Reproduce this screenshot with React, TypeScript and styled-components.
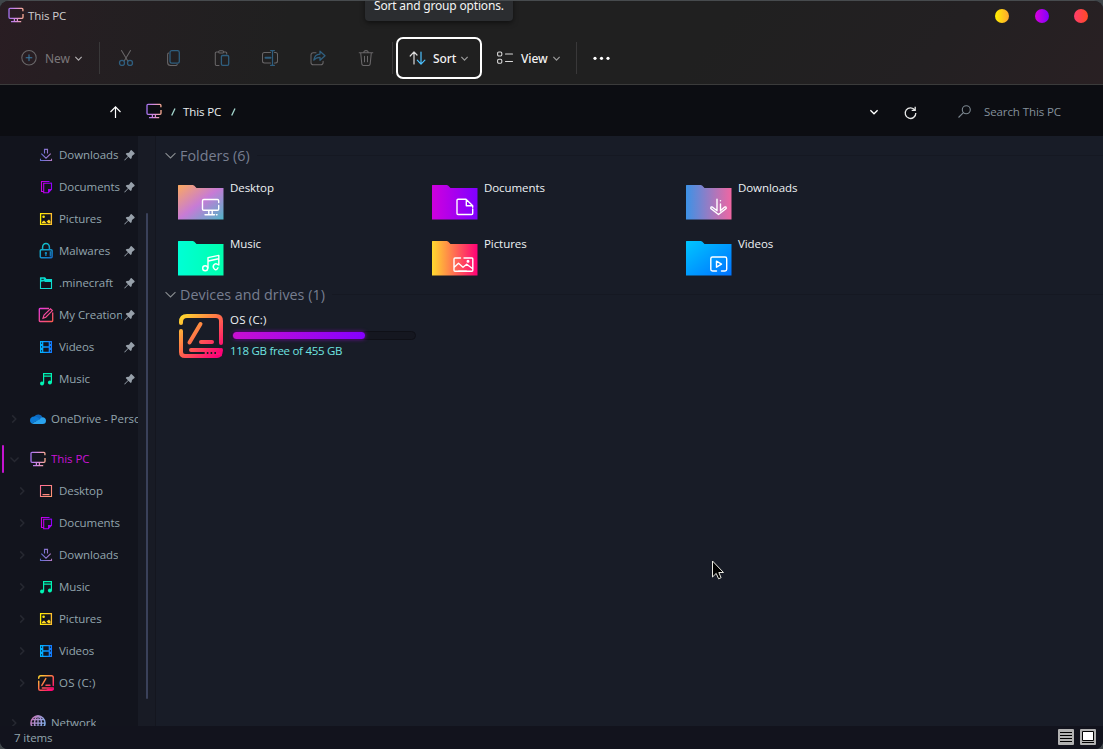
import React from 'react';
import styled, { createGlobalStyle } from 'styled-components';

const Global = createGlobalStyle`
  html, body { margin: 0; padding: 0; background: #40464a; overflow: hidden; }
  * { box-sizing: border-box; }
  svg { display: block; flex: none; overflow: visible; }
`;

const Window = styled.div`
  position: relative;
  width: 1103px;
  height: 749px;
  display: flex;
  flex-direction: column;
  border-top: 1px solid #474b4e;
  border-radius: 9px 9px 8px 8px;
  overflow: hidden;
  background: #181c27;
  font-family: 'Open Sans', 'Noto Sans', sans-serif;
  font-size: 11.5px;
  letter-spacing: -0.1px;
  color: #93a5ad;
  white-space: nowrap;
  cursor: default;
`;

const Header = styled.header`
  flex: none;
  height: 84px;
  border-bottom: 1px solid #3b3b3b;
  background:
    linear-gradient(100deg, rgba(46, 27, 36, 0.65) 0, rgba(42, 29, 36, 0.4) 110px, rgba(32, 32, 32, 0) 290px),
    linear-gradient(310deg, #292023 0, #232022 150px, #202020 330px);
`;

const TitleBar = styled.div`
  display: flex;
  align-items: center;
  height: 30px;
  padding: 0 15px 0 8px;
  color: #d0ced0;
`;

const TitleGroup = styled.div`
  display: flex;
  align-items: center;
  flex: 1;
  gap: 4px;
  margin-bottom: 2px;
`;

const Controls = styled.div`
  display: flex;
  gap: 25.5px;
`;

const Dot = styled.span<{ $from: string; $to: string }>`
  width: 14px;
  height: 14px;
  border-radius: 50%;
  background: linear-gradient(90deg, ${(p) => p.$from}, ${(p) => p.$to});
`;

const Toolbar = styled.div`
  display: flex;
  align-items: center;
  height: 42px;
  margin-top: 6px;
  padding-left: 20.5px;
`;

const ToolLabel = styled.span<{ $dim?: boolean }>`
  font-family: 'Noto Sans', 'Open Sans', sans-serif;
  font-size: 12px;
  letter-spacing: -0.05px;
  font-weight: ${(p) => (p.$dim ? 400 : 500)};
  color: ${(p) => (p.$dim ? '#7b777a' : '#f2f2f2')};
`;

const NewButton = styled.div`
  display: flex;
  align-items: center;
  width: 78.5px;
  ${ToolLabel} { margin-left: 8.5px; width: 30px; }
`;

const Separator = styled.span`
  width: 1px;
  height: 32px;
  background: #393839;
`;

const IconStrip = styled.div`
  display: flex;
  gap: 32px;
  padding: 0 18px;
`;

const SortButton = styled.div`
  display: flex;
  align-items: center;
  width: 86px;
  height: 42px;
  margin-left: 3px;
  padding-left: 11px;
  border: 2px solid #fff;
  border-radius: 7px;
  ${ToolLabel} { margin-left: 7px; width: 28px; }
`;

const ViewButton = styled.div`
  display: flex;
  align-items: center;
  width: 94px;
  padding-left: 15px;
  ${ToolLabel} { margin-left: 8px; width: 31.5px; }
`;

const MoreButton = styled.div`
  padding-left: 15.500px;
`;

const AddressBar = styled.div`
  flex: none;
  display: flex;
  align-items: center;
  height: 51px;
  padding: 2px 0 0 110px;
  background: #0c0d12;
  color: #e8ecee;
`;

const Crumb = styled.span<{ $last?: boolean }>`
  margin: 0 7px 0 ${(p) => (p.$last ? 10 : 9)}px;
`;

const Crumbs = styled.div`
  display: flex;
  align-items: center;
  width: 749px;
  padding-left: 25px;
  > svg { margin-bottom: 1.500px; }
`;

const RefreshGroup = styled.div`
  display: flex;
  align-items: center;
  gap: 26px;
  padding-top: 1px;
`;

const Search = styled.div`
  display: flex;
  align-items: center;
  gap: 13px;
  margin-left: 41px;
  color: #84909b;
`;

const Body = styled.div`
  flex: none;
  display: flex;
  height: 590px;
`;

const Sidebar = styled.nav`
  width: 138px;
  padding-top: 3px;
  overflow: hidden;
  background: #12141d;
`;

const SideRow = styled.div<{ $level?: boolean; $gap?: boolean; $active?: boolean }>`
  position: relative;
  display: flex;
  align-items: center;
  height: 32px;
  margin-top: ${(p) => (p.$gap ? 8 : 0)}px;
  padding-left: ${(p) => (p.$level ? 18 : 10)}px;
  color: ${(p) => (p.$active ? '#c913d6' : '#93a5ad')};
  &::before {
    content: '';
    position: absolute;
    left: 2px;
    top: 2px;
    width: 2px;
    height: 28px;
    border-radius: 1px;
    background: ${(p) => (p.$active ? '#c414d0' : 'transparent')};
  }
`;

const Arrow = styled.span`
  width: 20px;
  flex: none;
`;

const SideLabel = styled.span<{ $pinned?: boolean; $loose?: boolean }>`
  margin: 0 2px 2px 5px;
  flex: none;
  overflow: hidden;
  letter-spacing: ${(p) => (p.$loose ? '0.2px' : '-0.06px')};
  width: ${(p) => (p.$pinned ? '63px' : 'auto')};
`;

const ScrollLane = styled.div`
  width: 18px;
  padding: 77px 0 0 8px;
  background: #181b25;
  border-right: 1px solid #14161f;
`;

const Thumb = styled.div`
  width: 2px;
  height: 486px;
  border-radius: 1px;
  background: #3a415a;
`;

const Content = styled.main`
  flex: 1;
  padding: 8px 0 0 9px;
  background: #181c27;
`;

const GroupHeader = styled.div`
  display: flex;
  align-items: center;
  height: 23px;
  font-size: 14.3px;
  letter-spacing: 0.03px;
  color: #777e90;
  span { margin-left: 4px; }
  &::after {
    content: '';
    flex: 1;
    height: 1px;
    margin-left: 7px;
    background: #151822;
  }
`;

const Grid = styled.div`
  display: grid;
  grid-template-columns: repeat(3, 254px);
  grid-auto-rows: 56px;
  padding: 18px 0 0 13px;
  height: 116px;
`;

const Tile = styled.div`
  display: flex;
  gap: 6px;
  color: #eef2f4;
`;

const TileName = styled.span`
  margin-top: -5px;
  line-height: 16px;
  letter-spacing: -0.07px;
`;

const Drive = styled.div`
  display: flex;
  gap: 6px;
  padding: 6px 0 0 13px;
  > svg { margin-top: 1px; }
`;

const DriveInfo = styled.div`
  width: 186px;
  line-height: 16px;
`;

const DriveName = styled.div`
  letter-spacing: 0.2px;
  color: #eef2f4;
`;

const Meter = styled.div`
  width: 185px;
  height: 9px;
  margin: 3px 0 3px 1px;
  padding: 1px;
  border: 1px solid #0f1017;
  border-radius: 5px;
  background: #151720;
`;

const MeterFill = styled.div`
  width: 132px;
  height: 7px;
  margin-top: -1px;
  border-radius: 4px;
  background: linear-gradient(90deg, #c80fd2, #8500ff);
  box-shadow: 0 0 4px rgba(165, 10, 230, 0.75);
`;

const DriveFree = styled.div`
  letter-spacing: -0.29px;
  color: #6fe3e0;
`;

const StatusBar = styled.footer`
  flex: 1;
  display: flex;
  align-items: center;
  padding: 0 7px 0 14px;
  background: #12131d;
`;

const StatusText = styled.span`
  flex: 1;
  color: #93a5ad;
`;

const ViewModes = styled.div`
  display: flex;
  gap: 6px;
  margin-bottom: 1px;
`;

const Tooltip = styled.div`
  position: absolute;
  left: 365px;
  top: -6px;
  width: 148px;
  height: 26px;
  padding-left: 9px;
  line-height: 22px;
  font-family: 'Noto Sans', 'Open Sans', sans-serif;
  font-size: 12px;
  letter-spacing: -0.18px;
  color: #f4f4f4;
  background: #2b2d30;
  border-radius: 4px;
  box-shadow: 0 2px 5px rgba(0, 0, 0, 0.5);
`;

const Pointer = styled.svg`
  position: absolute;
  left: 712px;
  top: 559px;
`;

type Stops = [string, string] | [string, string, string];
const Grad = ({ id, c, diag }: { id: string; c: Stops; diag?: boolean }) => (
  <linearGradient id={id} x1="0" y1="0" x2="1" y2={diag ? 1 : 0}>
    {c.map((color, i) => (
      <stop key={i} offset={i / (c.length - 1)} stopColor={color} />
    ))}
  </linearGradient>
);

const GradientDefs = styled.svg`
  position: absolute;
`;

const SharedGradients = () => (
  <GradientDefs width="0" height="0">
    <defs>
      <linearGradient id="pc" gradientUnits="userSpaceOnUse" x1="0" y1="0" x2="16" y2="0">
        <stop offset="0" stopColor="#a070f0" /><stop offset=".5" stopColor="#d58ade" /><stop offset="1" stopColor="#ffb08a" />
      </linearGradient>
      <linearGradient id="dl" gradientUnits="userSpaceOnUse" x1="2" y1="0" x2="14" y2="0">
        <stop offset="0" stopColor="#5d6fd8" /><stop offset="1" stopColor="#b47ac4" />
      </linearGradient>
      <linearGradient id="doc" gradientUnits="userSpaceOnUse" x1="2" y1="0" x2="14" y2="0">
        <stop offset="0" stopColor="#d000e0" /><stop offset="1" stopColor="#8c00ff" />
      </linearGradient>
      <linearGradient id="lock" gradientUnits="userSpaceOnUse" x1="2" y1="0" x2="14" y2="16">
        <stop offset="0" stopColor="#10d0cc" /><stop offset="1" stopColor="#1668c8" />
      </linearGradient>
      <linearGradient id="edit" gradientUnits="userSpaceOnUse" x1="1" y1="0" x2="15" y2="14">
        <stop offset="0" stopColor="#e838e8" /><stop offset="1" stopColor="#ff5a50" />
      </linearGradient>
      <linearGradient id="film" gradientUnits="userSpaceOnUse" x1="2" y1="0" x2="14" y2="0">
        <stop offset="0" stopColor="#00b8ff" /><stop offset="1" stopColor="#1478ff" />
      </linearGradient>
      <linearGradient id="pic" gradientUnits="userSpaceOnUse" x1="2" y1="0" x2="14" y2="0">
        <stop offset="0" stopColor="#fff000" /><stop offset="1" stopColor="#ffbe30" />
      </linearGradient>
      <linearGradient id="desk" gradientUnits="userSpaceOnUse" x1="2" y1="2" x2="14" y2="14">
        <stop offset="0" stopColor="#ff6c98" /><stop offset="1" stopColor="#ff9a70" />
      </linearGradient>
      <linearGradient id="drive" gradientUnits="userSpaceOnUse" x1="4" y1="2" x2="40" y2="42">
        <stop offset="0" stopColor="#ffd92e" /><stop offset=".5" stopColor="#ff6b4a" /><stop offset="1" stopColor="#ff0077" />
      </linearGradient>
      <linearGradient id="net" gradientUnits="userSpaceOnUse" x1="1" y1="0" x2="15" y2="8">
        <stop offset="0" stopColor="#d072b4" /><stop offset="1" stopColor="#84aee8" />
      </linearGradient>
    </defs>
  </GradientDefs>
);

const Icon16 = ({ children, size = 16 }: { children: React.ReactNode; size?: number }) => (
  <svg width={size} height={size} viewBox="0 0 16 16" fill="none">{children}</svg>
);

const PcIcon = () => (
  <Icon16>
    <g stroke="url(#pc)" strokeWidth="1.3">
      <path d="M14.9 4.2V2.3q0-1-1-1H2q-1 0-1 1v8q0 1 1 1h12q1 0 1-1V7" />
      <path d="M6.4 11.5v3M9.4 11.5v3" />
      <path d="M3 14.7h10.2M13 14.1h.1" />
    </g>
  </Icon16>
);
const DownloadsIcon = () => (
  <Icon16>
    <path d="M6.5 6.4v-4h3v4M3.3 6.7 8 11.2l4.7-4.5M2.5 11.8v1.7h11v-1.7" stroke="url(#dl)" strokeWidth="1.1" />
  </Icon16>
);
const DocumentsIcon = () => (
  <Icon16>
    <path d="M5.5 12.5h-2v-10h8M5.7 4.3h7.8v6l-3.2 3.4H5.7zM13 3.5v1" stroke="url(#doc)" strokeWidth="1.1" />
    <path d="M10 10h4l-4 4z" fill="#a900f4" />
  </Icon16>
);
const PicturesIcon = () => (
  <Icon16>
    <path d="M2.6 2.6h10.8v10.8H2.6z" stroke="url(#pic)" strokeWidth="1.3" />
    <path d="M4 12.2V11l2-1.5 1 1.1L8.5 12.2zM8.5 10.6 11 8.6l1.5 2v1.6h-2z" fill="#ffd722" />
    <circle cx="5.6" cy="5.7" r="1.3" fill="#ffe80c" />
  </Icon16>
);
const LockIcon = () => (
  <Icon16>
    <g stroke="url(#lock)" strokeWidth="1.5">
      <path d="M4.6 6.5V4.2a3.3 3.6 0 0 1 6.8 0v2.3" />
      <rect x="2.3" y="6.8" width="11.8" height="8" rx="1" />
      <path d="M7.9 9v4M6.8 10.2H9M12.3 8.3v5.2" strokeWidth="1.2" />
    </g>
  </Icon16>
);
const FolderSmallIcon = () => (
  <Icon16>
    <path d="M2.5 3v10.5h11V4.6H8.2L7 3z" stroke="#10ddd0" strokeWidth="1.1" />
    <path d="M2.2 7V2.5H7l1.2 1.8h5.6V7H7L6 6.2z" fill="#08dccf" />
    <path d="M3.4 3.8h2.4v1H3.4z" fill="#12141d" />
  </Icon16>
);
const EditIcon = () => (
  <Icon16>
    <g stroke="url(#edit)" strokeWidth="1.3">
      <path d="M11 1.5H2q-.7 0-.7.7v11.6q0 .7.7.7h12q.7 0 .7-.7V5.500" />
      <path d="M5 11.2 6 8.100l6.500-6.300 1.900 1.800L7.800 10.200z" strokeWidth="1.150" />
    </g>
  </Icon16>
);
const VideosIcon = () => (
  <Icon16>
    <path d="M2 2h12v12H2z" fill="url(#film)" />
    <path d="M5.3 3.2h5.4v4H5.3zM5.3 8.800h5.400v4H5.300zM3 3.400h1.100v1.300H3zM3 7.300h1.100v1.300H3zM3 11.200h1.100v1.300H3zM11.900 3.400H13v1.300h-1.100zM11.900 7.300H13v1.300h-1.100zM11.900 11.200H13v1.300h-1.100z" fill="#12141d" />
  </Icon16>
);
const MusicIcon = () => (
  <Icon16>
    <path d="M5.6 12.5V2.6h7.8v8.800M5.600 5.200h7.800" stroke="#00f4b4" strokeWidth="1.2" />
    <circle cx="4" cy="12.4" r="2" fill="#00f4b4" />
    <circle cx="11.9" cy="11.4" r="2" fill="#00f4b4" />
  </Icon16>
);
const DesktopIcon = () => (
  <Icon16>
    <path d="M2.5 2.5h11v11h-11zM4.500 11.600h7" stroke="url(#desk)" strokeWidth="1.1" />
  </Icon16>
);
const OneDriveIcon = () => (
  <Icon16>
    <path d="M4.3 5.6A4.8 4.8 0 0 1 12.6 6.2L7 10.5 2 8z" fill="#0f68bd" />
    <path d="M4.3 5.6C1.6 5.5 0 7.3 0 9.4c0 1.3.7 2.5 1.8 3.2L9.7 8.3C8 6.5 6 5.5 4.3 5.6z" fill="#0b7ad6" />
    <path d="M12.6 6.2c2 0 3.4 1.5 3.4 3.4a3.4 3.4 0 0 1-3.4 3.5H3.8c-.8 0-1.5-.2-2-.5l7.9-4.3c.8-1.4 1.7-2.1 2.9-2.1z" fill="#2aa3ee" />
  </Icon16>
);
const NetworkIcon = () => (
  <Icon16>
    <g stroke="url(#net)" strokeWidth="1.5">
      <circle cx="8" cy="8" r="7" />
      <ellipse cx="8" cy="8" rx="3.4" ry="7" />
      <path d="M8 1v14M1 8.1h14M2 4.6h12M2 11.5h12" strokeWidth="1.3" />
    </g>
  </Icon16>
);
const DriveIcon = ({ small }: { small?: boolean }) => {
  const w = small ? 16 : 46;
  return (
    <svg width={w} height={w} viewBox={small ? '1 1 44 44' : '0 0 46 46'} fill="none" stroke="url(#drive)" strokeWidth={4} strokeLinecap="round">
      <path d="M3 10V9q0-6 6-6h29q5 0 5 5v22" />
      <path d="M3 18v21q0 4 4 4h32q3.500 0 4-6" />
      <path d="M22.500 11 11.500 29.500M23 29h11M13 37h28" />
      <path d="M27 39.500h16v3H27z" strokeWidth="1.5" fill="#ff1473" />
      {!small && <path d="M25 40h15" stroke="#191c27" strokeWidth="1.8" strokeDasharray="1.6 2.2" strokeLinecap="butt" />}
    </svg>
  );
};

const Pin = () => (
  <svg width="11" height="11" viewBox="0 0 11 11" fill="#97a0aa">
    <path d="M6.7.3q.5-.4 1 0l2.800 2.800q.4.500 0 1L8 5.900 7.600 8.200l-.9.900-2.400-2.400L.800 10.500.200 10 3.900 6.300 1.700 4l.9-.9L5 2.800z" />
  </svg>
);

const Chevron = ({ size = 7, color = '#9a999b', right = false, sw = 1.2 }: { size?: number; color?: string; right?: boolean; sw?: number }) => (
  <svg width={size} height={size} viewBox="0 0 8 8" fill="none" stroke={color} strokeWidth={(sw * 8) / size}>
    <path d={right ? 'M2.2.4 5.8 4 2.2 7.6' : 'M.4 2.2 4 5.8 7.6 2.2'} />
  </svg>
);

const Tool = ({ children }: { children: React.ReactNode }) => (
  <svg width="16" height="16" viewBox="0 0 16 16" fill="none" strokeWidth="1.05" stroke="#686668" strokeLinecap="round" strokeLinejoin="round">
    {children}
  </svg>
);
const BLUE = '#2f5e7e';

const folderShape = 'M0 .5Q0 0 .5 0H14.5q1 0 1.6.6L18.5 3H45.5V34.5H0z';

type FolderSpec = { name: string; c: Stops; diag?: boolean; glyph: React.ReactNode };
const folders: FolderSpec[] = [
  {
    name: 'Desktop', c: ['#fba95f', '#c77bd6', '#4fb4c8'], diag: true,
    glyph: <path d="M40.7 17.5v-1.7q0-1.3-1.3-1.3H25.8q-1.3 0-1.3 1.3v8.2q0 1.3 1.3 1.3h13.6q1.3 0 1.3-1.3v-3.5M30.8 25.5v4M34.2 25.5v4M27 29.7h9.5M38.5 29.7h.5" />,
  },
  {
    name: 'Documents', c: ['#cf00de', '#8000ff'],
    glyph: <path d="M34 14.3h-8q-1 0-1 1v13.2q0 1 1 1h13.7q1 0 1-1v-4.5M34 14.3l6.7 6.5M34.3 14.5v6.3h6.4v1.5" />,
  },
  {
    name: 'Downloads', c: ['#3c92e6', '#f066a2'],
    glyph: <path d="M31 14.2v11.500M34.500 15.600v.2M34.500 19v7M24.800 23.500l7.700 6 7.700-6M24.800 23.200q0-2 1.800-1l3.800 3M40.200 23.200q0-2-1.800-1l-3.500 3" />,
  },
  {
    name: 'Music', c: ['#00ffd5', '#00ffae'],
    glyph: (
      <>
        <circle cx="27.2" cy="27.2" r="2.5" />
        <path d="M30 27V16.6L40.8 14.4V24M30.500 20l10-2.200M39.800 23.500q-2.500-1.700-4 .5t.6 4 3.600-1.200" />
      </>
    ),
  },
  {
    name: 'Pictures', c: ['#ffd92e', '#ff0077'],
    glyph: (
      <>
        <path d="M28.5 17H23q-1 0-1 1v11.3q0 1 1 1h17q.8 0 .8-1V18q0-1-.8-1h-8M22.500 26l4-3.700 4.500 4 3.700-3 6 4.500M26.500 30h8" />
        <circle cx="36" cy="20.3" r=".8" />
      </>
    ),
  },
  {
    name: 'Videos', c: ['#00c6ff', '#0072ff'], diag: true,
    glyph: <path d="M30.5 30h-4q-1.700 0-1.700-1.700V17.700q0-1.700 1.700-1.700h12.500q1.700 0 1.700 1.700v10.600q0 1.700-1.700 1.700h-3.500M30.500 20.200v6l5-3z" />,
  },
];

const Folder = ({ name, c, diag, glyph }: FolderSpec) => (
  <svg width="46" height="35" viewBox="0 0 46 35">
    <defs><Grad id={`f${name}`} c={c} diag={diag} /></defs>
    <path d={folderShape} fill={`url(#f${name})`} />
    <g fill="none" stroke="#fff" strokeWidth="1.4" strokeLinecap="round" strokeLinejoin="round">{glyph}</g>
  </svg>
);

type Nav = { label: string; icon: React.ReactNode; pin?: boolean; top?: boolean; open?: boolean; loose?: boolean };
const nav: Nav[] = [
  { label: 'Downloads', icon: <DownloadsIcon />, pin: true },
  { label: 'Documents', icon: <DocumentsIcon />, pin: true },
  { label: 'Pictures', icon: <PicturesIcon />, pin: true },
  { label: 'Malwares', icon: <LockIcon />, pin: true },
  { label: '.minecraft', icon: <FolderSmallIcon />, pin: true },
  { label: 'My Creations', icon: <EditIcon />, pin: true },
  { label: 'Videos', icon: <VideosIcon />, pin: true },
  { label: 'Music', icon: <MusicIcon />, pin: true },
  { label: 'OneDrive - Personal', icon: <OneDriveIcon />, top: true },
  { label: 'This PC', icon: <PcIcon />, top: true, open: true },
  { label: 'Desktop', icon: <DesktopIcon /> },
  { label: 'Documents', icon: <DocumentsIcon /> },
  { label: 'Downloads', icon: <DownloadsIcon /> },
  { label: 'Music', icon: <MusicIcon /> },
  { label: 'Pictures', icon: <PicturesIcon /> },
  { label: 'Videos', icon: <VideosIcon /> },
  { label: 'OS (C:)', icon: <DriveIcon small />, loose: true },
  { label: 'Network', icon: <NetworkIcon />, top: true },
];

const Slash = () => (
  <svg width="5" height="8" viewBox="0 0 5 8"><path d="M.7 7.5 4 .5" stroke="#a5d8cf" strokeWidth="1.3" /></svg>
);

export default function App() {
  return (
    <>
      <Global />
      <Window>
        <SharedGradients />
        <Header>
          <TitleBar>
            <TitleGroup>
              <PcIcon />
              <span>This PC</span>
            </TitleGroup>
            <Controls>
              <Dot $from="#fff000" $to="#ffa630" />
              <Dot $from="#d800dc" $to="#8200ff" />
              <Dot $from="#ff3d6c" $to="#ff4a24" />
            </Controls>
          </TitleBar>
          <Toolbar>
            <NewButton>
              <Tool><circle cx="8" cy="7.7" r="7.2" /><path d="M8 4.8v5.8M5.1 7.7h5.8" stroke="#3a7ba5" /></Tool>
              <ToolLabel $dim>New</ToolLabel>
              <Chevron size={7} color="#b0adaf" />
            </NewButton>
            <Separator />
            <IconStrip>
              <Tool>
                <path d="M3.5.5 9.8 11M12.5.5 6.2 11" />
                <g stroke={BLUE} strokeWidth="1.3"><circle cx="4" cy="12.9" r="2.5" /><circle cx="12" cy="12.9" r="2.5" /></g>
              </Tool>
              <Tool>
                <path d="M2.5 3q-.9.5-.9 1.7v7.8q0 3 3 3h5q1.2 0 1.7-.9" />
                <rect x="4" y=".6" width="9.3" height="12.6" rx="1.8" stroke={BLUE} strokeWidth="1.3" />
              </Tool>
              <Tool>
                <path d="M4.5 2H2.5Q1.3 2 1.3 3.2v11Q1.3 15.400 2.500 15.400H5M12.700 4V3.200Q12.700 2 11.500 2H9.600" />
                <rect x="4.7" y=".7" width="4.8" height="2.3" rx="1.1" />
                <rect x="7.4" y="5.5" width="7.3" height="9.9" rx="1.3" stroke={BLUE} strokeWidth="1.3" />
              </Tool>
              <Tool>
                <path d="M8.5 2.5H2.5Q.5 2.5.5 4.5v6.5q0 2 2 2h6M12.5 2.5h1q2 0 2 2v6.5q0 2-2 2h-1" />
                <path d="M10.5.7v14.6M8.6.6h3.8M8.6 15.4h3.8" stroke={BLUE} strokeWidth="1.2" />
                <path d="M3.5 7.8h5" stroke={BLUE} strokeWidth="2" />
              </Tool>
              <Tool>
                <path d="M6 2.7H3.3Q1 2.7 1 5v7.5q0 2.3 2.3 2.3h7.5q2.3 0 2.3-2.3v-1.2" />
                <path d="M10 1.2v2.9Q4.5 4.3 3.8 10.2 6.2 7.3 10 7.4v2.9l5-4.6z" stroke={BLUE} strokeWidth="1.3" />
              </Tool>
              <Tool>
                <path d="M1.2 2.7h13.600M5.800 2.600q0-2 2.200-2t2.200 2M2.700 2.900l1.100 11q.2 1.500 1.600 1.500h5.200q1.400 0 1.600-1.500l1.100-11M6.500 6.200v5.500M9.500 6.200v5.500" />
              </Tool>
            </IconStrip>
            <Separator />
            <SortButton>
              <svg width="17" height="14" viewBox="0 0 17 14" fill="none" strokeWidth="1.2" strokeLinecap="round" strokeLinejoin="round">
                <path d="M5 13V1M1.2 5 5 .9 8 4" stroke="#dcdcdc" />
                <path d="M12 1v12M8.3 9.2l3.7 4 3.9-4" stroke="#4cc2ff" />
              </svg>
              <ToolLabel>Sort</ToolLabel>
              <Chevron size={7} color="#9a9a9a" />
            </SortButton>
            <ViewButton>
              <svg width="16" height="14" viewBox="0 0 16 14" fill="none" strokeWidth="1.1" stroke="#d8d8d8" strokeLinecap="round">
                <rect x=".6" y="1" width="4.2" height="4" rx="1.2" />
                <rect x=".6" y="8.2" width="4.2" height="4" rx="1.2" />
                <path d="M8.5 3h7M8.5 10.5h7" />
              </svg>
              <ToolLabel>View</ToolLabel>
              <Chevron size={7} color="#9a9a9a" />
            </ViewButton>
            <Separator />
            <MoreButton>
              <svg width="17" height="4" viewBox="0 0 17 4" fill="#fff">
                <circle cx="2" cy="2.3" r="1.6" /><circle cx="8.5" cy="2.3" r="1.6" /><circle cx="15" cy="2.3" r="1.6" />
              </svg>
            </MoreButton>
          </Toolbar>
        </Header>
        <AddressBar>
          <svg width="11" height="12" viewBox="0 0 11 12" fill="none" stroke="#fff" strokeWidth="1.2"><path d="M5.5 12V1M.5 6l5-5.200 5 5.200" /></svg>
          <Crumbs>
            <PcIcon />
            <Crumb><Slash /></Crumb>
            <span>This PC</span>
            <Crumb $last><Slash /></Crumb>
          </Crumbs>
          <RefreshGroup>
            <Chevron size={8} color="#fff" sw={1.3} />
            <svg width="13" height="13" viewBox="0 0 13 13" fill="none" stroke="#e8e8e8" strokeWidth="1.3">
              <path d="M10.9 4.2A5.3 5.3 0 1 0 11.8 7M11.2.8v3.6H7.700" />
            </svg>
          </RefreshGroup>
          <Search>
            <svg width="13" height="13" viewBox="0 0 13 13" fill="none" stroke="#7c8790" strokeWidth="1.1"><circle cx="8.3" cy="4.7" r="4" /><path d="M5.4 7.6.5 12.5" /></svg>
            <span>Search This PC</span>
          </Search>
        </AddressBar>
        <Body>
          <Sidebar>
            {nav.map((n, i) => (
              <SideRow key={i} $level={!n.top} $gap={n.top} $active={n.open}>
                <Arrow>
                  {!n.pin && <Chevron size={n.open ? 9 : 8} color="#262831" right={!n.open} sw={1.5} />}
                </Arrow>
                {n.icon}
                <SideLabel $pinned={n.pin} $loose={n.loose}>{n.label}</SideLabel>
                {n.pin && <Pin />}
              </SideRow>
            ))}
          </Sidebar>
          <ScrollLane><Thumb /></ScrollLane>
          <Content>
            <GroupHeader><Chevron size={11} color="#888c90" sw={1.1} /><span>Folders (6)</span></GroupHeader>
            <Grid>
              {folders.map((f) => (
                <Tile key={f.name}><Folder {...f} /><TileName>{f.name}</TileName></Tile>
              ))}
            </Grid>
            <GroupHeader><Chevron size={11} color="#888c90" sw={1.1} /><span>Devices and drives (1)</span></GroupHeader>
            <Drive>
              <DriveIcon />
              <DriveInfo>
                <DriveName>OS (C:)</DriveName>
                <Meter><MeterFill /></Meter>
                <DriveFree>118 GB free of 455 GB</DriveFree>
              </DriveInfo>
            </Drive>
          </Content>
        </Body>
        <StatusBar>
          <StatusText>7 items</StatusText>
          <ViewModes>
            <svg width="16" height="16" viewBox="0 0 16 16"><rect width="16" height="16" rx="1" fill="#b2b2b2" /><path d="M2 3.5h12M2 6.5h12M2 9.5h12M2 12.5h12" stroke="#000" /></svg>
            <svg width="16" height="16" viewBox="0 0 16 16"><rect width="16" height="16" rx="1" fill="#b2b2b2" /><path d="M2.500 2.500h11v9h-11z" fill="#fff" stroke="#000" /><path d="M2 13.500h12" stroke="#000" /></svg>
          </ViewModes>
        </StatusBar>
        <Tooltip>Sort and group options.</Tooltip>
        <Pointer width="12" height="20" viewBox="0 0 12 20">
          <path d="M.5 1v16l3.7-3.6 2.4 5.4 2.500-1.100-2.300-5.200h4.700z" fill="#000" stroke="#e8e8e0" strokeWidth="1" />
        </Pointer>
      </Window>
    </>
  );
}
